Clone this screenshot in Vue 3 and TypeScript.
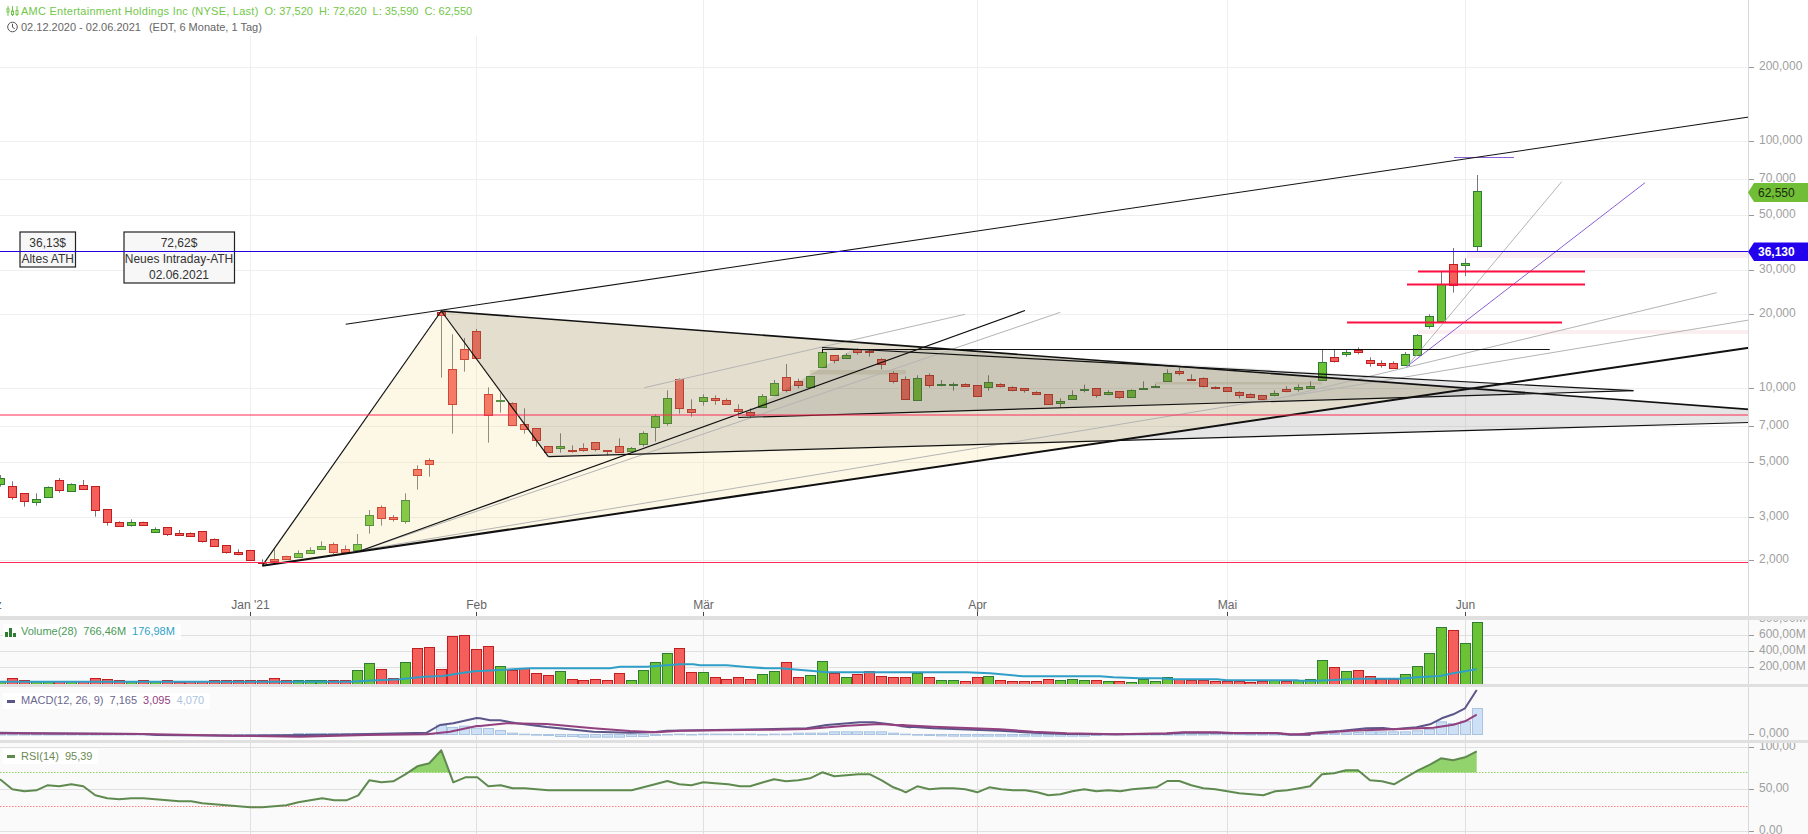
<script setup lang="ts">
type Row = [number, number, number, number, number];
interface Candle { x: number; top: number; h: number; wt: number; wb: number; up: boolean; vol: number }

const xAt = (i: number): number => Math.floor(0.4 + 11.91 * i) + 0.5;
const snap = (v: number): number => Math.round(v) + 0.5;

// body top, body bottom, wick top, wick bottom, 1 = up; values are 3x-scale offsets from the group's base y
const groups: { y0: number; rows: Row[] }[] = [
  { y0: 440, rows: [
    [115,133,105,140,1],[139,172,124,179,0],[160,182,160,200,0],[178,187,160,197,1],[142,172,139,172,1],[121,151,114,158,0],
    [133,154,130,154,1],[136,146,120,149,0],[139,211,139,230,0],[208,247,208,257,0],[247,257,244,260,0],[247,254,238,260,1],
    [247,254,245,257,0],[268,277,262,277,1],[262,281,262,288,0],[280,284,270,284,0],[280,289,277,290,0],[274,304,274,308,0],
    [298,319,295,319,0],[316,337,316,341,0],[337,343,328,346,0],[331,361,331,361,0] ] },
  { y0: 300, rows: [
    [785,789,778,790,0],[778,782,748,787,0],[769,776,767,778,0],[760,770,751,770,1],[751,758,742,758,1],[739,746,724,746,1],
    [733,755,727,762,0],[748,755,736,758,0],[733,751,702,751,1],[646,674,630,701,1],[622,655,616,677,0],[652,656,645,665,0],
    [601,662,580,671,1],[508,526,496,569,0],[481,491,475,530,0],[36,44,30,233,0],[208,313,103,401,0],[148,176,114,215,0],
    [94,173,87,173,0],[283,344,262,428,0],[301,304,280,338,1],[310,376,307,376,0],[373,388,325,401,0],[385,421,385,440,0],
    [439,457,439,457,0],[439,445,400,458,1],[450,452,436,458,0],[445,451,430,455,0],[427,448,427,454,0],[451,454,451,466,0],
    [439,457,415,457,0],[445,454,441,454,1],[400,433,394,440,1],[349,382,343,425,1],[295,370,271,377,1],[238,325,235,341,0],
    [328,337,298,350,0],[292,304,283,317,1],[295,301,286,314,0],[301,313,295,314,0],[328,334,313,350,0] ] },
  { y0: 300, rows: [
    [335,345,325,352,0],[289,320,282,323,1],[250,286,240,286,1],[232,271,192,277,0],[244,256,236,265,0],[229,260,229,263,1],
    [157,202,145,202,1],[166,181,166,190,0],[166,175,160,176,1],[148,157,145,164,0],[154,157,148,170,0],[178,193,175,208,0],
    [220,244,214,250,0],[238,298,229,298,0],[235,301,226,301,1],[226,256,220,263,0],[253,256,240,259,1],[253,256,247,272,1],
    [253,259,250,260,0],[256,287,256,290,0],[247,262,226,272,1],[253,259,250,262,0],[262,271,259,274,0],[265,271,265,278,0],
    [277,283,274,285,0],[283,313,283,315,0],[304,310,295,322,1],[286,298,271,298,1],[267,269,254,277,1],[265,286,265,293,0],
    [277,283,271,286,1],[274,290,274,296,0],[271,290,268,293,1],[264,266,244,268,1],[259,262,253,263,1],[220,244,208,244,1],
    [214,220,202,226,0],[238,240,223,241,0],[235,259,232,262,0],[262,265,259,268,0],[262,274,262,276,0],[277,286,274,295,0],
    [283,292,280,293,0],[286,298,286,300,0],[280,286,271,289,1],[268,274,259,277,0],[262,268,253,275,1] ] },
  { y0: 150, rows: [
    [707,715,694,715,1],[637,689,598,692,1],[622,632,598,638,0],[607,613,598,620,1],[601,607,592,613,0],[631,640,622,650,0],
    [640,644,631,653,0],[640,655,634,656,0],[613,646,606,646,1],[556,616,552,616,1],[499,529,493,536,1],[402,514,365,514,1],
    [343,406,294,428,0],[340,344,325,378,1],[124,289,75,304,1] ] },
];

const volumes: number[] = [
  8,18,11,8,8,8,8,8,18,15,11,8,11,8,11,5,9,9,11,13,11,11,11,18,11,11,11,11,13,13,42,63,45,17,66,108,111,45,144,147,105,114,
  53,42,47,32,26,38,14,11,14,11,32,11,41,65,92,107,35,35,20,14,20,14,29,38,65,20,26,68,32,20,29,38,23,20,20,32,20,11,11,8,
  20,23,11,8,8,8,14,11,14,11,11,8,8,5,14,8,20,14,11,11,8,8,8,5,8,11,8,11,14,71,51,39,42,24,15,15,30,54,93,171,162,123,186,
];

const histogram: number[] = [
  0,0,0,0,0,0,0,0,0,0,0,0,0,0,0,0,0,0,0,0,0,0,0,0,0,3,3,3,3,3,3,3,3,3,3,3,3,28,21,25,19,18,12,4,1,-2,-3,-6,-6,-8,-8,-8,-8,-6,-6,-3,-1,
  1,0,1,1,1,1,1,0,1,1,4,4,4,8,8,8,8,8,4,1,-2,-3,-4,-5,-5,-5,-5,-5,-5,-5,-5,-5,-5,-5,-5,-3,-1,0,0,0,0,0,0,0,0,1,1,1,0,0,0,0,1,
  2,4,3,5,6,8,8,8,8,11,15,38,33,40,78,
];

const candles: Candle[] = [];
groups.forEach((g) => {
  g.rows.forEach(([t, b, wt, wb, up]) => {
    const i = candles.length;
    const top = snap(g.y0 + t / 3);
    const bot = snap(g.y0 + b / 3);
    candles.push({ x: xAt(i), top, h: Math.max(bot - top, 1), wt: g.y0 + wt / 3, wb: g.y0 + wb / 3, up: up === 1, vol: volumes[i] / 3 });
  });
});

const seg = (x0: number, y0: number, list: number[]): string => {
  const out: string[] = [];
  for (let k = 0; k < list.length; k += 2) out.push(`${(x0 + list[k] / 3).toFixed(1)},${(y0 + list[k + 1] / 3).toFixed(1)}`);
  return out.join(" ");
};

const volumeMa = [
  seg(0, 590, [0,275,1050,275,1100,272,1200,268,1270,260,1330,258,1380,250,1429,243]),
  seg(480, 615, [0,168,60,165,150,160,390,160,420,155,500,155,600,148,640,148,660,151,740,151,800,156,860,160,900,160,1000,168,1040,172,1260,172]),
  seg(900, 615, [0,172,200,172,270,175,370,184,600,184,640,187,720,190,780,190,820,193,950,193,980,196,1190,196]),
  seg(1300, 590, [0,272,50,272,100,270,170,266,300,266,350,262,420,258,460,250,530,238]),
].join(" ");

const macdLine = [
  seg(0, 590, [0,428,100,430,430,432,470,435,700,437,1000,434,1280,428,1320,405,1360,400,1430,384]),
  seg(480, 615, [0,310,30,316,60,316,110,325,200,336,340,350,450,353,520,352,560,347,880,342,980,340,1040,330,1140,322,1180,322,1230,328,1290,337]),
  seg(900, 615, [0,333,100,340,300,347,400,353,500,357,650,358,800,356,850,353,950,353,1000,355,1130,355,1170,359,1230,359]),
  seg(1300, 590, [0,433,60,427,120,423,200,415,250,414,280,418,350,412,390,403,425,385,460,373,495,355,530,300]),
].join(" ");

const signalLine = [
  seg(0, 590, [0,430,430,432,700,437,900,440,1100,435,1280,433,1350,425,1430,408]),
  seg(480, 615, [0,333,80,325,200,327,340,340,450,348,530,352,600,347,880,344,980,342,1100,332,1200,327,1290,333]),
  seg(900, 615, [0,330,100,335,300,343,400,350,500,355,650,358,800,355,850,352,950,352,1000,354,1130,354,1170,358,1230,358]),
  seg(1300, 590, [0,433,50,430,150,422,300,417,400,413,460,404,495,394,530,374]),
].join(" ");

const rsiLine = [
  seg(0, 590, [0,568,37,598,73,604,109,601,142,586,178,589,214,583,250,589,286,616,322,625,358,628,394,625,430,625,466,628,502,631,538,634,574,634,607,640,643,643,679,646,715,649,751,652,787,652,823,649,859,646,895,637,931,631,967,625,1003,631,1039,631,1075,616,1108,571,1144,577,1180,574,1216,553,1252,529,1288,520,1324,481,1360,577,1396,562,1432,562]),
  seg(480, 615, [25,514,62,511,98,520,134,520,205,526,455,526,490,517,525,508,562,498,598,508,634,511,670,502,705,505,745,508,780,514,810,514,850,502,882,493,918,499,955,496,990,490,1027,472,1063,484,1100,481,1135,478,1170,478,1205,496,1240,517]),
  seg(900, 615, [0,524,17,532,52,514,88,523,124,520,160,520,196,523,232,532,268,517,304,523,340,526,376,526,412,532,445,541,481,538,517,529,553,523,589,529,625,526,661,529,697,523,733,520,769,517,802,498,838,498,874,511,910,520,946,523,982,529,1018,535,1054,538,1090,541,1126,529,1162,526,1198,520]),
  seg(1300, 590, [30,589,66,553,102,550,138,541,174,541,210,571,246,574,282,583,318,562,354,541,390,524,423,505,459,511,495,502,530,484]),
].join(" ");
const rsiFill = `0,773 ${rsiLine} 1476.7,773`;

const months = [
  { label: "Dez", x: -9 }, { label: "Jan '21", x: 250.5 }, { label: "Feb", x: 476.5 }, { label: "Mär", x: 703.5 },
  { label: "Apr", x: 977.5 }, { label: "Mai", x: 1227.5 }, { label: "Jun", x: 1465.5 },
];
const grid = months.slice(1);

const priceAxis: [string, number][] = [
  ["200,000", 67.5], ["100,000", 141.5], ["70,000", 179.5], ["50,000", 215.5], ["30,000", 270.5], ["20,000", 314.5],
  ["10,000", 388.5], ["7,000", 426.5], ["5,000", 462.5], ["3,000", 517.5], ["2,000", 560.5],
];
const volAxis: [string, number][] = [["800,00M", 619.5], ["600,00M", 635.5], ["400,00M", 651.5], ["200,00M", 667.5]];
const rsiAxis: [string, number][] = [["100,00", 747.5], ["50,00", 789.5], ["0,00", 831.5]];

const greyFan: [number, number, number, number][] = [
  [360, 551, 1060.4, 312.3], [362, 550, 1749, 320], [644.3, 387.7, 965, 314.3], [1290, 395.5, 1716.7, 292.7], [1406.7, 366.7, 1561.7, 181.7],
];
const blackLines: [number, number, number, number, number][] = [
  [262.3, 565.7, 441.3, 311, 1.2], [441.3, 311, 548.3, 456.7, 1.2], [262.3, 565.7, 1749, 347.7, 2],
  [441.3, 311, 1749, 409.4, 1.6], [548.3, 456.7, 1749, 422.5, 1.2], [738.3, 417.5, 1633.4, 390.7, 1.2],
  [822, 347.5, 1633.4, 390.7, 1.2], [360, 551, 1025, 310.5, 1.2], [345.7, 324.3, 1749, 117, 1.1],
  [822, 349.5, 1549.7, 349.5, 1], [822.5, 349, 822.5, 353, 1],
];
const redBars: [number, number, number][] = [[1418, 1585, 271.5], [1407, 1585, 284.5], [1347, 1562, 322.5]];
</script>

<template>
  <div class="chart">
    <section class="pane pane-main">
      <svg class="plot" viewBox="0 0 1808 616" width="1808" height="616">
        <line v-for="[, y] in priceAxis" :key="'g' + y" class="grid" x1="0" x2="1749" :y1="y" :y2="y" />
        <line v-for="m in grid" :key="'v' + m.x" class="grid" :x1="m.x" :x2="m.x" y1="0" y2="616" />
        <rect class="pink" x="1467" y="252" width="281" height="6" />
        <rect class="pink" x="1418" y="330" width="330" height="4" />
        <rect class="band" x="810" y="370" width="96" height="4.5" />
        <rect class="band" x="1155" y="382" width="167" height="2.5" />
        <g v-for="c in candles" :key="c.x">
          <line class="wick" :x1="c.x" :x2="c.x" :y1="c.wt" :y2="c.wb" />
          <rect :class="c.up ? 'up' : 'down'" :x="c.x - 4" :y="c.top" width="8" :height="c.h" />
        </g>
        <polygon class="fill-yellow" points="262.3,565.7 441.3,311 1471,388.4" />
        <polygon class="fill-grey" points="441.3,311 548.3,456.7 1749,422.5 1749,409.4" />
        <polygon class="fill-grey" points="738.3,417.5 853,349 918,349.3 1633.4,390.7" />
        <line v-for="l in greyFan" :key="'f' + l[0]" class="fan" :x1="l[0]" :y1="l[1]" :x2="l[2]" :y2="l[3]" />
        <line class="violet" x1="1406.7" y1="366.7" x2="1645" y2="182.7" />
        <line class="violet" x1="1454" y1="157.5" x2="1514" y2="157.5" />
        <line v-for="l in blackLines" :key="'b' + l[0] + l[1]" class="ink" :x1="l[0]" :y1="l[1]" :x2="l[2]" :y2="l[3]" :stroke-width="l[4]" />
        <line class="red-thin" x1="0" x2="1749" y1="415" y2="415" />
        <line class="red-thin" x1="0" x2="1749" y1="562.5" y2="562.5" />
        <line v-for="r in redBars" :key="'r' + r[2]" class="red-bar" :x1="r[0]" :x2="r[1]" :y1="r[2]" :y2="r[2]" />
        <g>
          <rect class="note" x="20" y="232" width="55.5" height="35" />
          <text class="note-text" x="47.7" y="247">36,13$</text>
          <text class="note-text" x="47.7" y="263">Altes ATH</text>
          <rect class="note" x="124" y="232" width="110.5" height="51" />
          <text class="note-text" x="179" y="247">72,62$</text>
          <text class="note-text" x="179" y="263">Neues Intraday-ATH</text>
          <text class="note-text" x="179" y="279">02.06.2021</text>
        </g>
        <line class="blue-line" x1="0" x2="1749" y1="251.5" y2="251.5" />
        <line class="axis-line" x1="1748.5" x2="1748.5" y1="0" y2="616" />
        <g v-for="[label, y] in priceAxis" :key="label">
          <line class="tick" x1="1749" x2="1754" :y1="y" :y2="y" />
          <text class="axis-text" x="1759" :y="y + 2.5">{{ label }}</text>
        </g>
        <polygon class="tag-green" points="1748,192.4 1754,183 1808,183 1808,202 1754,202" />
        <text class="tag-text dark" x="1758" y="196.5">62,550</text>
        <polygon class="tag-blue" points="1748,251.7 1754,242.5 1808,242.5 1808,261 1754,261" />
        <text class="tag-text light" x="1758" y="256">36,130</text>
        <g v-for="m in months" :key="m.label">
          <line class="month-tick" :x1="m.x" :x2="m.x" y1="612" y2="616" />
          <text class="month-text" :x="m.x" y="609">{{ m.label }}</text>
        </g>
      </svg>
      <header class="head">
        <div class="head-row title-row">
          <svg class="head-icon" viewBox="0 0 12 10" width="12" height="10">
            <g class="icon-stroke">
              <path d="M1.5 0v10M6 0v10M10.5 0v10" />
              <rect x="0.5" y="3" width="2" height="3" />
              <rect x="5" y="5" width="2" height="3.5" />
              <rect x="9.5" y="4.5" width="2" height="4" />
            </g>
          </svg>
          <span class="title-name">AMC Entertainment Holdings Inc (NYSE, Last)</span>
          <span>O: 37,520</span><span>H: 72,620</span><span>L: 35,590</span><span>C: 62,550</span>
        </div>
        <div class="head-row range-row">
          <svg class="head-icon" viewBox="0 0 12 12" width="12" height="12">
            <circle class="clock" cx="6" cy="6" r="4.8" />
            <path class="clock" d="M6 2.8V6.2L8.2 7.6" />
          </svg>
          <span>02.12.2020 - 02.06.2021</span>
          <span>(EDT, 6 Monate, 1 Tag)</span>
        </div>
      </header>
    </section>
    <div class="sep sep-first"></div>

    <section class="pane pane-vol">
      <svg class="plot" viewBox="0 620 1808 64" width="1808" height="64">
        <line v-for="[, y] in volAxis.slice(1)" :key="y" class="grid-dark" x1="0" x2="1749" :y1="y" :y2="y" />
        <line v-for="m in grid" :key="m.x" class="grid-dark" :x1="m.x" :x2="m.x" y1="620" y2="684" />
        <rect v-for="c in candles" :key="c.x" :class="c.up ? 'up-vol' : 'down'" :x="c.x - 5" :y="snap(684 - c.vol)" width="10" :height="c.vol + 2" />
        <polyline class="ma" :points="volumeMa" />
        <line class="axis-line" x1="1748.5" x2="1748.5" y1="620" y2="684" />
        <g v-for="[label, y] in volAxis" :key="label">
          <line class="tick" x1="1749" x2="1754" :y1="y" :y2="y" />
          <text class="axis-text" x="1759" :y="y + 2.5">{{ label }}</text>
        </g>
      </svg>
      <div class="legend legend-vol">
        <svg class="legend-bars" viewBox="0 0 11 9" width="11" height="9"><path class="bars-icon" d="M0 4h3v5H0zM4 0h3v9H4zM8 5h3v4H8z" /></svg>
        <span class="c-vol">Volume(28)</span><span class="c-vol">766,46M</span><span class="c-ma">176,98M</span>
      </div>
    </section>
    <div class="sep"></div>

    <section class="pane pane-macd">
      <svg class="plot" viewBox="0 687 1808 53" width="1808" height="53">
        <line v-for="m in grid" :key="m.x" class="grid-dark" :x1="m.x" :x2="m.x" y1="687" y2="740" />
        <g v-for="(h, i) in histogram" :key="i">
          <rect class="hist" :x="xAt(i) - 5" :y="h > 0 ? 734.5 - h / 3 : 734.5" width="10" :height="Math.max(Math.abs(h) / 3, 0.5)" />
        </g>
        <polyline class="macd" :points="macdLine" />
        <polyline class="signal" :points="signalLine" />
        <line class="axis-line" x1="1748.5" x2="1748.5" y1="687" y2="740" />
        <line class="tick" x1="1749" x2="1754" y1="734.5" y2="734.5" />
        <text class="axis-text" x="1759" y="737">0,000</text>
      </svg>
      <div class="legend legend-macd">
        <i class="dash dash-macd"></i>
        <span class="c-macd">MACD(12, 26, 9)</span><span class="c-macd">7,165</span><span class="c-signal">3,095</span><span class="c-hist">4,070</span>
      </div>
    </section>
    <div class="sep"></div>

    <section class="pane pane-rsi">
      <svg class="plot" viewBox="0 743 1808 91" width="1808" height="91">
        <defs>
          <clipPath id="rsi-over"><rect x="0" y="743" width="1749" height="29.5" /></clipPath>
        </defs>
        <line v-for="[, y] in rsiAxis" :key="y" class="grid-dark" x1="0" x2="1749" :y1="y" :y2="y" />
        <line v-for="m in grid" :key="m.x" class="grid-dark" :x1="m.x" :x2="m.x" y1="743" y2="834" />
        <line class="dot-green" x1="0" x2="1749" y1="772.5" y2="772.5" />
        <line class="dot-red" x1="0" x2="1749" y1="806.5" y2="806.5" />
        <polygon class="rsi-fill" clip-path="url(#rsi-over)" :points="rsiFill" />
        <polyline class="rsi" :points="rsiLine" />
        <line class="axis-line" x1="1748.5" x2="1748.5" y1="743" y2="834" />
        <g v-for="[label, y] in rsiAxis" :key="label">
          <line class="tick" x1="1749" x2="1754" :y1="y" :y2="y" />
          <text class="axis-text" x="1759" :y="y + 2.5">{{ label }}</text>
        </g>
      </svg>
      <div class="legend legend-rsi">
        <i class="dash dash-rsi"></i>
        <span class="c-rsi">RSI(14)</span><span class="c-rsi">95,39</span>
      </div>
    </section>
  </div>
</template>

<style scoped>
.chart {
  width: 1808px;
  height: 834px;
  overflow: hidden;
  display: flex;
  flex-direction: column;
  background: #fff;
  font-family: "Liberation Sans", Arial, sans-serif;
}
.pane { position: relative; overflow: hidden; flex: none; }
.pane-main { height: 616px; background: #fff; }
.pane-vol { height: 64px; background: #fafafa; }
.pane-macd { height: 53px; background: #fafafa; }
.pane-rsi { height: 91px; background: #fafafa; }
.sep { height: 3px; background: #e0e0e0; flex: none; }
.sep-first { height: 4px; }
.plot { display: block; }

.grid { stroke: #efefef; stroke-width: 1; }
.grid-dark { stroke: #e0e0e0; stroke-width: 1; }
.axis-line { stroke: #d8d8d8; stroke-width: 1; }
.tick { stroke: #999; stroke-width: 1; }
.axis-text { font-size: 12px; fill: #a0a0a0; }
.month-text { font-size: 12px; fill: #666; text-anchor: middle; }
.month-tick { stroke: #444; stroke-width: 1; }

.wick { stroke: #777; stroke-width: 1; }
.up { fill: #6ac234; stroke: #2e7d32; stroke-width: 1; }
.up-vol { fill: #6ac234; stroke: #2e7d32; stroke-width: 1; }
.down { fill: #f55f5b; stroke: #c11f1f; stroke-width: 1; }

.fill-yellow { fill: rgba(248, 225, 140, 0.22); }
.fill-grey { fill: rgba(0, 0, 0, 0.1); }
.pink { fill: #fbeef0; }
.band { fill: rgba(190, 190, 160, 0.35); }
.fan { stroke: #b4b4b4; stroke-width: 1; }
.violet { stroke: #8a5fd5; stroke-width: 1; }
.ink { stroke: #111; }
.red-thin { stroke: #ff2a55; stroke-width: 1; }
.red-bar { stroke: #ff1040; stroke-width: 2; }
.blue-line { stroke: #2200dd; stroke-width: 1; }

.note { fill: #f7f7f7; stroke: #222; stroke-width: 1.2; }
.note-text { font-size: 12px; fill: #333; text-anchor: middle; }

.tag-green { fill: #6fbe35; }
.tag-blue { fill: #2200ee; }
.tag-text { font-size: 12px; }
.tag-text.dark { fill: #1c2a10; }
.tag-text.light { fill: #fff; font-weight: bold; }

.head {
  position: absolute;
  left: 0;
  top: 0;
  width: 560px;
  height: 36px;
  background: #fff;
  padding: 3px 0 0 4px;
  box-sizing: border-box;
  font-size: 11px;
  line-height: 16px;
}
.head-row { display: flex; align-items: center; height: 16px; }
.head-icon { width: 17px; flex: none; }
.title-row { color: #72c74a; gap: 6px; }
.title-row .head-icon { margin-right: -6px; }
.title-name { letter-spacing: 0.25px; }
.range-row { color: #666; gap: 8px; }
.range-row .head-icon { margin-right: -8px; }
.icon-stroke { fill: #fff; stroke: #72c74a; stroke-width: 1; }
.clock { fill: none; stroke: #555; stroke-width: 1; }

.legend {
  position: absolute;
  left: 3px;
  display: flex;
  align-items: center;
  background: #fff;
  font-size: 11px;
  height: 16px;
  box-sizing: border-box;
  padding: 0 6px 2px 2px;
  gap: 6px;
}
.legend-vol { top: 4px; }
.legend-macd { top: 6px; }
.legend-rsi { top: 6px; height: 15px; }
.legend-bars { margin-right: -1px; margin-top: 2px; flex: none; }
.bars-icon { fill: #2e7d32; }
.dash { display: block; width: 8px; height: 3px; margin: 2px 0 0 2px; flex: none; }
.dash-macd { background: #5b5689; }
.dash-rsi { background: #5f8a4f; }
.c-vol { color: #4a9a58; }
.c-ma { color: #2f9fc8; }
.c-macd { color: #6b6790; }
.c-signal { color: #93407f; }
.c-hist { color: #aac3de; }
.c-rsi { color: #6a8a55; }

.hist { fill: #cde0f5; stroke: #a9c3e0; stroke-width: 1; }
.ma { fill: none; stroke: #2f9fc8; stroke-width: 2; stroke-linejoin: round; }
.macd { fill: none; stroke: #5b5689; stroke-width: 2; stroke-linejoin: round; }
.signal { fill: none; stroke: #93407f; stroke-width: 2; stroke-linejoin: round; }
.rsi { fill: none; stroke: #5f8a4f; stroke-width: 2; stroke-linejoin: round; }
.rsi-fill { fill: #93d36e; }
.dot-green { stroke: #8fd45f; stroke-width: 1; stroke-dasharray: 1.5 1.5; }
.dot-red { stroke: #ff8080; stroke-width: 1; stroke-dasharray: 1.5 1.5; }
</style>
